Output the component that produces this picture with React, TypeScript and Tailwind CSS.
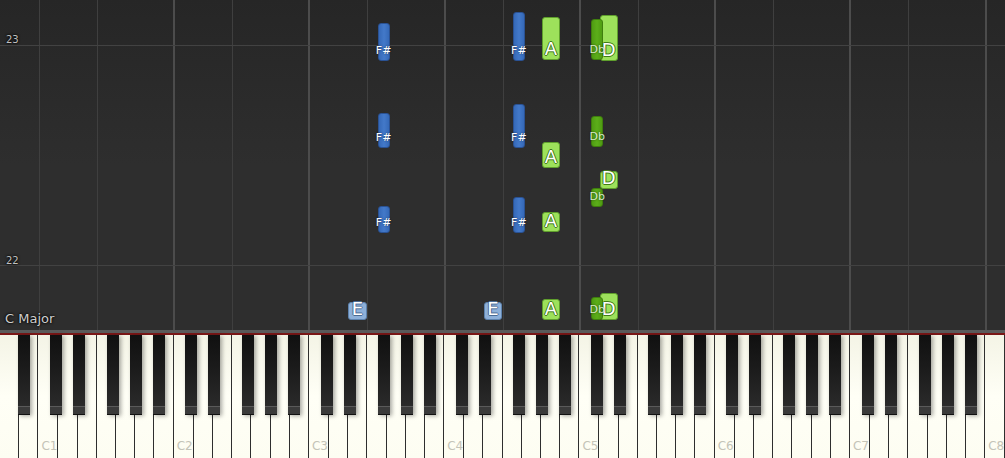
import React from "react";

const W = 1005 / 52;
const whiteX = (oct: number, idx: number) => W * (2 + 7 * (oct - 1) + idx);
const BOFF: Record<string, number> = { "C#": 11.35, "D#": 34.35, "F#": 68.35, "G#": 91.35, "A#": 114.35 };
const blackX = (oct: number, name: string) => whiteX(oct, 0) + BOFF[name];

type NoteT = {
  x: number;
  w: number;
  top: number;
  bottom: number;
  label: string;
  kind: "blueB" | "blueW" | "greenB" | "greenW";
};

const notes: NoteT[] = [];
const addB = (x: number, rows: [number, number][], label: string, kind: NoteT["kind"]) =>
  rows.forEach(([t, b]) => notes.push({ x, w: 12, top: t, bottom: b, label, kind }));
const addW = (x: number, rows: [number, number][], label: string, kind: NoteT["kind"]) =>
  rows.forEach(([t, b]) => notes.push({ x: x + 0.5, w: W - 1, top: t, bottom: b, label, kind }));

addW(whiteX(3, 2), [[302, 320]], "E", "blueW");
addW(whiteX(4, 2), [[302, 320]], "E", "blueW");
addW(whiteX(4, 5), [[17, 60], [142, 168], [212, 232], [299, 320]], "A", "greenW");
addW(whiteX(5, 1), [[15, 61], [171, 189], [293, 320]], "D", "greenW");
addB(blackX(3, "F#"), [[23, 61], [113, 148], [206, 233]], "F#", "blueB");
addB(blackX(4, "F#"), [[12, 61], [104, 148], [197, 233]], "F#", "blueB");
addB(blackX(5, "C#"), [[19, 60], [116, 147], [188, 207], [297, 320]], "Db", "greenB");

const kindCls: Record<NoteT["kind"], string> = {
  blueB: "bg-gradient-to-r from-[#3569b8] via-[#4379c9] to-[#3569b8] border border-[#2a5294]",
  blueW: "bg-[#8db0d9] border border-[#5d82ad]",
  greenB: "bg-gradient-to-r from-[#4f9c12] via-[#5cae1a] to-[#4f9c12] border border-[#3f7f0d]",
  greenW: "bg-[#9de15b] border border-[#5f9f2c]",
};

const bigStroke: Record<string, string> = {
  blueW: "[text-shadow:1px_0_0_#4a6b93,-1px_0_0_#4a6b93,0_1px_0_#4a6b93,0_-1px_0_#4a6b93]",
  greenW: "[text-shadow:1px_0_0_#3f7a18,-1px_0_0_#3f7a18,0_1px_0_#3f7a18,0_-1px_0_#3f7a18]",
};

function Note({ n }: { n: NoteT }) {
  const isBlack = n.kind === "blueB" || n.kind === "greenB";
  return (
    <div
      className={`absolute rounded-[3px] flex flex-col items-center justify-end ${kindCls[n.kind]} ${isBlack ? "z-20" : "z-10"}`}
      style={{ left: n.x, width: n.w, top: n.top, height: n.bottom - n.top }}
    >
      {isBlack ? (
        <span
          className={`text-[11px] leading-none mb-[4px] whitespace-nowrap ${n.kind === "greenB" ? "text-[#d8ecc8]" : "text-white"} [text-shadow:0_0_2px_rgba(0,0,0,0.6)]`}
        >
          {n.label}
        </span>
      ) : (
        <span className={`text-[18px] leading-none mb-[1px] text-white ${bigStroke[n.kind]}`}>{n.label}</span>
      )}
    </div>
  );
}

const blackNames = ["C#", "D#", "F#", "G#", "A#"];

export default function App() {
  const vlines: { x: number; strong: boolean }[] = [];
  for (let o = 1; o <= 8; o++) {
    vlines.push({ x: whiteX(o, 0), strong: o !== 1 });
    if (o < 8) vlines.push({ x: whiteX(o, 3), strong: false });
  }
  const blacks: number[] = [whiteX(1, 0) - 7 * W + BOFF["A#"]];
  for (let o = 1; o <= 7; o++) blackNames.forEach((b) => blacks.push(blackX(o, b)));

  const whites = Array.from({ length: 52 }, (_, i) => i);

  return (
    <div className="w-[1005px] h-[458px] flex flex-col overflow-hidden bg-[#2d2d2d] font-['DejaVu_Sans',sans-serif]">
      {/* roll */}
      <div className="relative h-[330px] bg-gradient-to-b from-[#262626] via-[#2e2e2e] to-[#2e2e2e]">
        {vlines.map((l, i) => (
          <div
            key={i}
            className={`absolute top-0 bottom-0 ${l.strong ? "w-[2px] bg-[#4c4c4c]" : "w-px bg-[#3f3f3f]"}`}
            style={{ left: Math.round(l.x) - (l.strong ? 1 : 0) }}
          />
        ))}
        <div className="absolute left-0 right-0 top-[45px] h-px bg-[#424242]" />
        <div className="absolute left-0 right-0 top-[265px] h-px bg-[#424242]" />
        <span className="absolute left-[6px] top-[32px] text-[10px] text-[#c0c0c0] [text-shadow:0_0_3px_#000,0_0_2px_#000]">23</span>
        <span className="absolute left-[6px] top-[253px] text-[10px] text-[#c0c0c0] [text-shadow:0_0_3px_#000,0_0_2px_#000]">22</span>
        <span className="absolute left-[5px] top-[309px] text-[13px] text-[#cfcfcf] [text-shadow:0_0_3px_#000,0_0_2px_#000]">C Major</span>
        {notes.map((n, i) => (
          <Note key={i} n={n} />
        ))}
      </div>
      <div className="h-[3px] bg-[#5a5a5a]" />
      <div className="h-[2px] bg-[#7a1616]" />
      {/* keyboard */}
      <div className="relative flex-1 flex">
        {whites.map((i) => {
          const isC = (i - 2) % 7 === 0 && i >= 2;
          const oct = (i - 2) / 7 + 1;
          return (
            <div
              key={i}
              className="flex-1 h-full border-r border-[#2e2e2e] bg-gradient-to-b from-[#f4f4e6] via-[#fffff6] to-[#fdfdf2] flex flex-col justify-end"
            >
              {isC && <span className="pl-[3px] pb-[6px] text-[12px] leading-none text-[#c4c4b8]">C{oct}</span>}
            </div>
          );
        })}
        {blacks.map((x, i) => (
          <div
            key={i}
            className="absolute top-0 h-[80px] w-[12px] flex flex-col shadow-[2px_1px_4px_rgba(0,0,0,0.35)] z-10"
            style={{ left: x }}
          >
            <div className="flex-1 bg-gradient-to-b from-[#101010] via-[#1c1c1c] to-[#2a2a2a]" />
            <div className="h-[9px] bg-[#3a3a3a] border-t border-[#5a5a5a] border-b border-b-[#111]" />
          </div>
        ))}
      </div>
    </div>
  );
}
